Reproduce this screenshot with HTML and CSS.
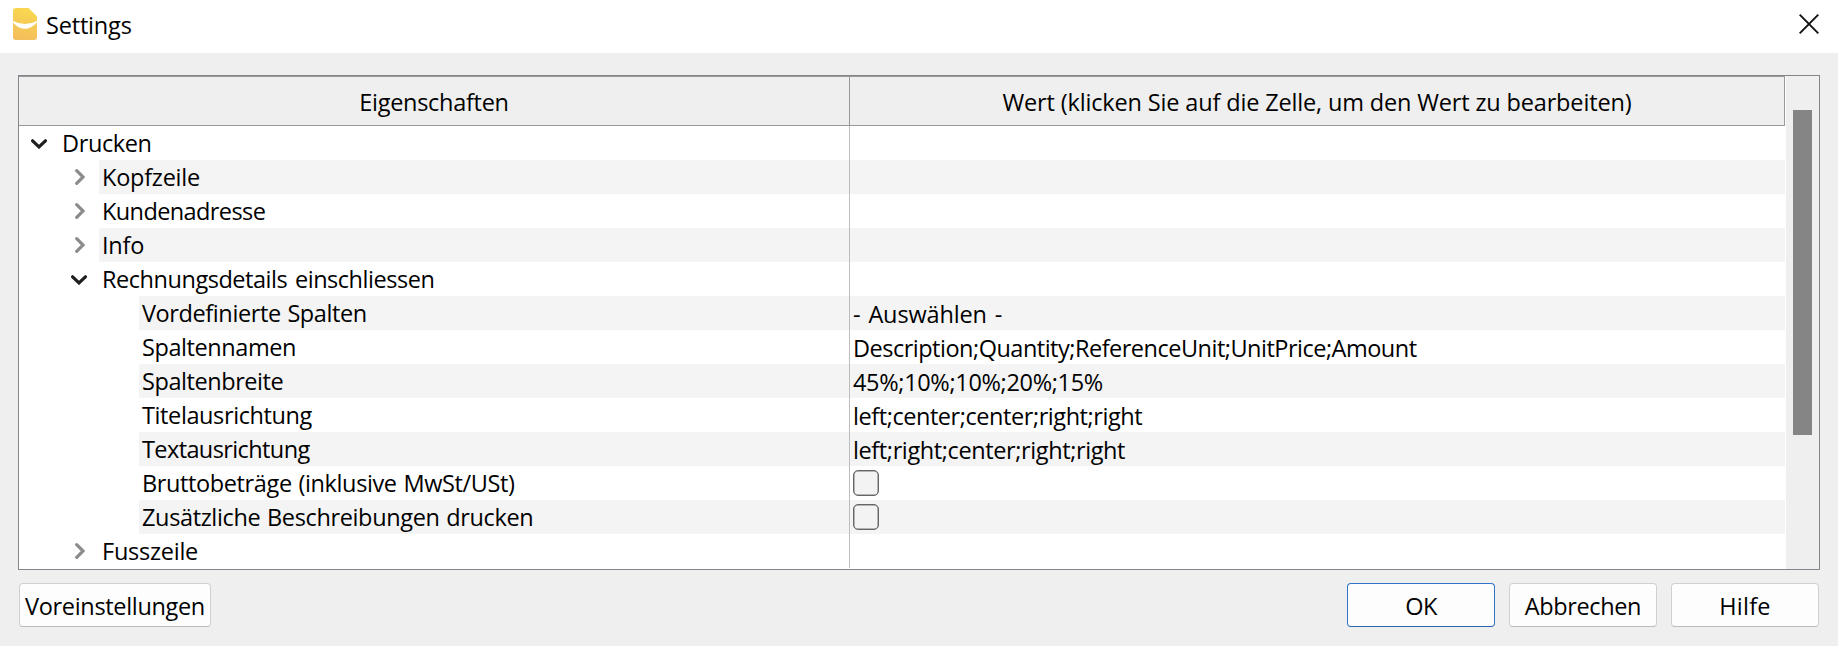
FILE: index.html
```html
<!DOCTYPE html>
<html lang="de">
<head>
<meta charset="utf-8">
<title>Settings</title>
<link rel="stylesheet" href="styles.css">
</head>
<body>
<svg class="defs" width="0" height="0">
  <symbol id="down" viewBox="0 0 16 10"><path d="M1.600 1.800L8 7.900L14.400 1.800" fill="none" stroke="#1f1f1f" stroke-width="3.200" stroke-linecap="round"/></symbol>
  <symbol id="right" viewBox="0 0 10 16"><path d="M1.700 1.700L7.900 8L1.700 14.300" fill="none" stroke="#8b8b8b" stroke-width="3.200" stroke-linecap="round"/></symbol>
</svg>
<header class="titlebar">
  <svg class="logo" viewBox="0 0 24 32">
    <defs><linearGradient id="gold" x1="0.600" y1="0" x2="0.400" y2="1"><stop offset="0" stop-color="#f9d84f"/><stop offset="1" stop-color="#f3bd5c"/></linearGradient></defs>
    <path d="M3 0H15.500L24 8.500V29a3 3 0 0 1-3 3H3a3 3 0 0 1-3-3V3a3 3 0 0 1 3-3z" fill="url(#gold)"/>
    <path d="M0 13Q12 19 24 13V14.500Q18 21 11 20.800Q5 20.500 0 14.500z" fill="#fff"/>
  </svg>
  <span class="title">Settings</span>
  <svg class="close" viewBox="0 0 20 20"><path d="M.7 .7L19.300 19.300M19.300 .7L.7 19.300" stroke="#111" stroke-width="1.900"/></svg>
</header>
<main class="panel">
  <div class="table">
    <div class="row head">
      <div class="name"><span class="ls-head1">Eigenschaften</span></div>
      <div class="value"><span class="ls-head2">Wert (klicken Sie auf die Zelle, um den Wert zu bearbeiten)</span></div>
    </div>
    <div class="row l1"><div class="name"><svg class="down"><use href="#down"/></svg><span class="label ls-drucken">Drucken</span></div><div class="value"></div></div>
    <div class="row l2 alt"><div class="name"><svg class="right"><use href="#right"/></svg><span class="label ls-kopf">Kopfzeile</span></div><div class="value"></div></div>
    <div class="row l2"><div class="name"><svg class="right"><use href="#right"/></svg><span class="label ls-kunde">Kundenadresse</span></div><div class="value"></div></div>
    <div class="row l2 alt"><div class="name"><svg class="right"><use href="#right"/></svg><span class="label ls-kopf">Info</span></div><div class="value"></div></div>
    <div class="row l2"><div class="name"><svg class="down"><use href="#down"/></svg><span class="label ls-details">Rechnungsdetails einschliessen</span></div><div class="value"></div></div>
    <div class="row l3 alt"><div class="name"><span class="label ls-predef">Vordefinierte Spalten</span></div><div class="value"><span class="ls-select">- Auswählen -</span></div></div>
    <div class="row l3"><div class="name"><span class="label ls-names">Spaltennamen</span></div><div class="value"><span class="ls-columns">Description;Quantity;ReferenceUnit;UnitPrice;Amount</span></div></div>
    <div class="row l3 alt"><div class="name"><span class="label ls-width">Spaltenbreite</span></div><div class="value"><span class="ls-percent">45%;10%;10%;20%;15%</span></div></div>
    <div class="row l3"><div class="name"><span class="label ls-title">Titelausrichtung</span></div><div class="value"><span class="ls-align1">left;center;center;right;right</span></div></div>
    <div class="row l3 alt"><div class="name"><span class="label ls-text">Textausrichtung</span></div><div class="value"><span class="ls-align2">left;right;center;right;right</span></div></div>
    <div class="row l3"><div class="name"><span class="label ls-gross">Bruttobeträge (inklusive MwSt/USt)</span></div><div class="value"><i class="check"></i></div></div>
    <div class="row l3 alt"><div class="name"><span class="label ls-extra">Zusätzliche Beschreibungen drucken</span></div><div class="value"><i class="check"></i></div></div>
    <div class="row l2"><div class="name"><svg class="right"><use href="#right"/></svg><span class="label ls-kopf">Fusszeile</span></div><div class="value"></div></div>
  </div>
  <div class="scroll"><div class="thumb"></div></div>
</main>
<footer class="buttons">
  <button class="btn presets">Voreinstellungen</button>
  <button class="btn ok">OK</button>
  <button class="btn cancel">Abbrechen</button>
  <button class="btn help">Hilfe</button>
</footer>
</body>
</html>
```

FILE: styles.css
```css
* { box-sizing: border-box; }
body {
  margin: 0;
  height: 646px;
  overflow: hidden;
  background: #efefef;
  color: #000;
  font: 23.5px/34px "Open Sans", "Noto Sans", sans-serif;
  white-space: nowrap;
}
.defs { display: block; height: 0; }
.titlebar {
  height: 53px;
  background: #fff;
  display: flex;
  align-items: flex-start;
  padding: 8px 19px 0 13px;
}
.logo { width: 24px; height: 32px; }
.title { margin-left: 9px; letter-spacing: -.18px; flex: 1; }
.close { width: 20px; height: 20px; margin-top: 6px; }

.panel {
  display: flex;
  margin: 22px 18px 0;
  height: 495px;
  border: 1px solid #82858c;
  background: #fff;
}
.table { width: 1766px; }
.row { display: flex; height: 34px; }
.name { width: 831px; display: flex; border-right: 1px solid #bdbdbd; }
.value { flex: 1; padding: 1px 0 0 3px; }
.label { flex: 1; padding-left: 3px; }
.alt .label, .alt .value { background: #f4f4f4; }

.head { height: 50px; background: #efefef; border: solid #999; border-width: 1px 1px 1px 0; width: 1766px; }
.head .name { border-color: #999; }
.head .name, .head .value { justify-content: center; text-align: center; padding: 8px 0 0; }

.l1 .name { padding-left: 12px; }
.l1 .label { margin-left: 12px; }
.l2 .name { padding-left: 52px; }
.l2 .label { margin-left: 12px; }
.l3 .name { padding-left: 120px; }
.down { width: 16px; height: 10px; margin-top: 13px; flex: none; }
.right { width: 10px; height: 16px; margin: 9px 2px 0 4px; flex: none; }
.check {
  display: block;
  width: 26px;
  height: 26px;
  margin-top: 3px;
  border: 1.5px solid #666;
  border-radius: 5px;
  background: #f3f3f3;
  box-shadow: inset 0 0 0 .5px #777;
}
.scroll { flex: 1; margin-left: 1px; padding: 34px 7px 0; background: #efefef; }
.thumb { width: 19px; height: 325px; background: #858585; }

.buttons { display: flex; gap: 14px; padding: 13px 19px 0; }
.btn {
  width: 148px;
  height: 44px;
  padding: 2px 0 0;
  border: 1px solid #d0d0d0;
  border-bottom-color: #bababa;
  border-radius: 4px;
  background: #fdfdfd;
  color: #000;
  font: inherit;
}
.presets { width: 192px; margin-right: auto; letter-spacing: -.33px; }
.ok { border-color: #2f74c8 #2f74c8 #2866b4; letter-spacing: -.49px; }
.cancel { letter-spacing: -.38px; }
.help { letter-spacing: .28px; }

.ls-head1 { letter-spacing: -.28px; }
.ls-head2 { letter-spacing: -.155px; }
.ls-drucken { letter-spacing: -.38px; }
.ls-kopf { letter-spacing: -.24px; }
.ls-kunde { letter-spacing: -.6px; }
.ls-details { letter-spacing: -.46px; word-spacing: 2px; }
.ls-predef { letter-spacing: -.4px; word-spacing: 1px; }
.ls-names { letter-spacing: -.42px; }
.ls-width { letter-spacing: -.43px; }
.ls-title { letter-spacing: -.39px; }
.ls-text { letter-spacing: -.6px; }
.ls-gross { letter-spacing: -.38px; word-spacing: 1px; }
.ls-extra { letter-spacing: -.36px; word-spacing: 1px; }
.ls-select { letter-spacing: -.14px; word-spacing: 2px; }
.ls-columns { letter-spacing: -.5px; }
.ls-percent { letter-spacing: -.33px; }
.ls-align1 { letter-spacing: -.44px; }
.ls-align2 { letter-spacing: -.39px; }
```
